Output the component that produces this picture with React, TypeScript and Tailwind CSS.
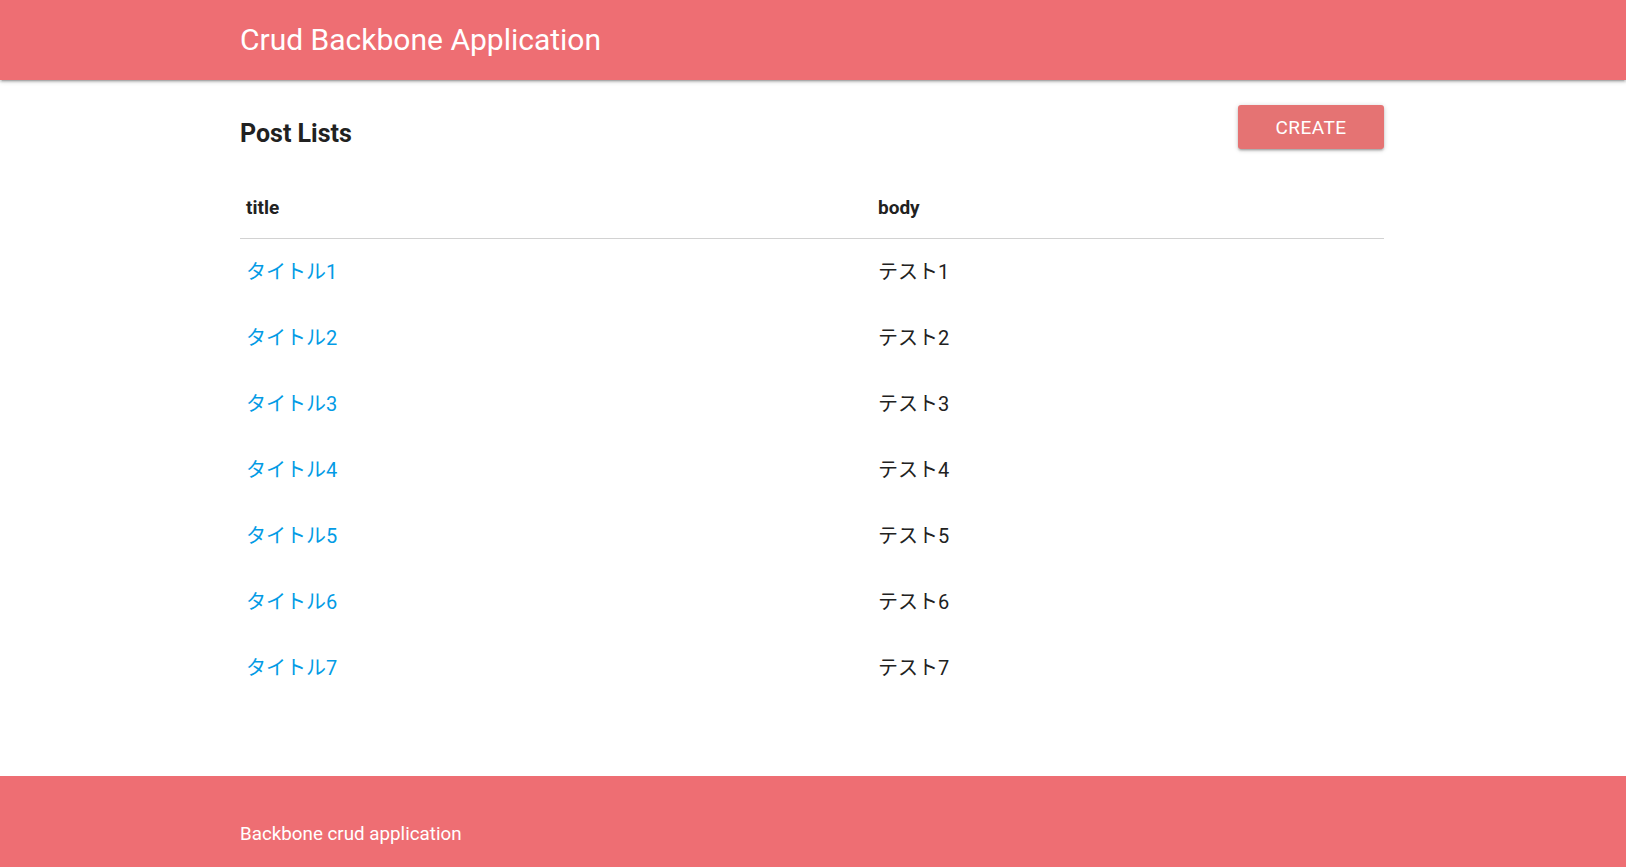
import React from "react";

const rows = [1, 2, 3, 4, 5, 6, 7];

export default function App() {
  return (
    <div
      className="min-h-screen bg-white text-[#212121]"
      style={{ fontFamily: 'Roboto, "Noto Sans CJK JP", sans-serif' }}
    >
      <nav className="relative z-10 h-[80px] bg-[#ee6e73] shadow-[0_2px_2px_0_rgba(0,0,0,0.14),0_3px_1px_-2px_rgba(0,0,0,0.12),0_1px_5px_0_rgba(0,0,0,0.2)]">
        <div className="ml-[240px] w-[1144px] text-[30px] leading-[80px] text-white">
          Crud Backbone Application
        </div>
      </nav>

      <main className="ml-[240px] w-[1144px]">
        <div className="flex items-start justify-between pt-[25px]">
          <h2 className="mt-[13px] text-[25px] font-bold leading-[32px] text-[#212121]">
            Post Lists
          </h2>
          <button className="h-[44px] w-[146px] rounded-[3px] bg-[#e57373] pt-[2px] text-[19px] tracking-[0.5px] text-white shadow-[0_2px_2px_0_rgba(0,0,0,0.14),0_3px_1px_-2px_rgba(0,0,0,0.12),0_1px_5px_0_rgba(0,0,0,0.2)]">
            CREATE
          </button>
        </div>

        <div className="mt-[26px]">
          <div className="grid h-[63px] grid-cols-[632px_1fr] items-center border-b border-[#d2d2d2] pt-[3px] text-[19px] font-bold">
            <div className="px-[6px]">title</div>
            <div className="px-[6px]">body</div>
          </div>
          {rows.map((n) => (
            <div
              key={n}
              className="grid h-[66px] grid-cols-[632px_1fr] items-center text-[20px]"
            >
              <div className="px-[6px]">
                <a href="#" className="text-[#039be5]">
                  タイトル{n}
                </a>
              </div>
              <div className="px-[6px] text-[#212121]">テスト{n}</div>
            </div>
          ))}
        </div>
      </main>

      <footer className="mt-[75px] h-[140px] bg-[#ee6e73] pt-[44px]">
        <div className="ml-[240px] w-[1144px] text-[18.8px] leading-[28px] text-white">
          Backbone crud application
        </div>
      </footer>
    </div>
  );
}
